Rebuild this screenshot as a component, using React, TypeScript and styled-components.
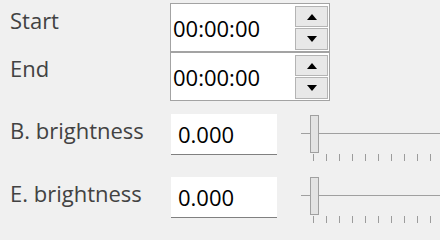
import React from "react";
import styled, { createGlobalStyle } from "styled-components";

const Global = createGlobalStyle`
  html, body { margin: 0; padding: 0; background: #f0f0f0; overflow: hidden; }
  body { font-family: "Open Sans", "Noto Sans", Arial, sans-serif; }
`;

const Page = styled.div`
  width: 440px;
  height: 237px;
  overflow: hidden;
  padding: 3px 0 0 10px;
  box-sizing: border-box;
  background: #f0f0f0;
`;

const Form = styled.div`
  display: flex;
  flex-direction: column;
`;

const Row = styled.div<{ $mt?: number; $h: number }>`
  display: grid;
  grid-template-columns: 160px 1fr;
  align-items: start;
  margin-top: ${(p) => p.$mt ?? 0}px;
  height: ${(p) => p.$h}px;
`;

const Label = styled.div<{ $pt: number }>`
  padding-top: ${(p) => p.$pt}px;
  font-size: 22px;
  line-height: 30px;
  color: #424242;
  white-space: nowrap;
`;

const SpinBox = styled.div`
  display: flex;
  width: 160px;
  height: 49px;
  box-sizing: border-box;
  border: 1px solid #a3a3a3;
  background: #fff;
`;

const SpinText = styled.div`
  flex: 1;
  display: flex;
  align-items: center;
  padding-left: 2px;
  font-size: 22px;
  color: #000;
`;

const SpinButtons = styled.div`
  display: flex;
  flex-direction: column;
  gap: 1px;
  padding: 2px 1px 1px 0;
`;

const SpinButton = styled.div<{ $h: number }>`
  width: 33px;
  height: ${(p) => p.$h}px;
  box-sizing: border-box;
  border: 1px solid #b4b4b4;
  background: #e8e8e8;
  display: flex;
  align-items: center;
  justify-content: center;
`;

const Arrow = styled.div<{ $up?: boolean }>`
  width: 0;
  height: 0;
  border-left: 5px solid transparent;
  border-right: 5px solid transparent;
  ${(p) =>
    p.$up
      ? "border-bottom: 6px solid #000;"
      : "border-top: 6px solid #000;"}
`;

const Controls = styled.div`
  display: flex;
  align-items: flex-start;
  gap: 24px;
  margin-left: 1px;
`;

const LineEdit = styled.div`
  width: 106px;
  height: 41px;
  box-sizing: border-box;
  background: #fff;
  border-bottom: 1px solid #808080;
  display: flex;
  align-items: center;
  padding-left: 7px;
  font-size: 22px;
  color: #000;
`;

const Slider = styled.div<{ $top: number }>`
  position: relative;
  width: 260px;
  height: 48px;
  margin-top: ${(p) => p.$top}px;
  flex-shrink: 0;
`;

const Groove = styled.div`
  position: absolute;
  left: 0;
  right: 0;
  top: 18px;
  height: 1px;
  background: #a0a0a0;
`;

const Handle = styled.div`
  position: absolute;
  top: 0;
  width: 9px;
  height: 38px;
  box-sizing: border-box;
  border: 1px solid #a0a0a0;
  background: #e3e3e3;
`;

const Ticks = styled.div`
  position: absolute;
  top: 39px;
  left: 12px;
  display: flex;
  gap: 12px;
`;

const Tick = styled.div`
  width: 1px;
  height: 7px;
  background: #9c9c9c;
`;

function TimeSpin({ value }: { value: string }) {
  return (
    <SpinBox>
      <SpinText>{value}</SpinText>
      <SpinButtons>
        <SpinButton $h={21}>
          <Arrow $up />
        </SpinButton>
        <SpinButton $h={22}>
          <Arrow />
        </SpinButton>
      </SpinButtons>
    </SpinBox>
  );
}

function TickSlider({ value, top }: { value: number; top: number }) {
  return (
    <Slider $top={top}>
      <Groove />
      <Handle style={{ left: 9 + value * 240 }} />
      <Ticks>
        {Array.from({ length: 20 }).map((_, i) => (
          <Tick key={i} />
        ))}
      </Ticks>
    </Slider>
  );
}

export default function App() {
  return (
    <>
      <Global />
      <Page>
        <Form>
          <Row $h={49}>
            <Label $pt={2}>Start</Label>
            <TimeSpin value="00:00:00" />
          </Row>
          <Row $h={49}>
            <Label $pt={1}>End</Label>
            <TimeSpin value="00:00:00" />
          </Row>
          <Row $mt={13} $h={63}>
            <Label $pt={1}>B. brightness</Label>
            <Controls>
              <LineEdit>0.000</LineEdit>
              <TickSlider value={0} top={1} />
            </Controls>
          </Row>
          <Row $h={63}>
            <Label $pt={1}>E. brightness</Label>
            <Controls>
              <LineEdit>0.000</LineEdit>
              <TickSlider value={0} top={0} />
            </Controls>
          </Row>
        </Form>
      </Page>
    </>
  );
}
